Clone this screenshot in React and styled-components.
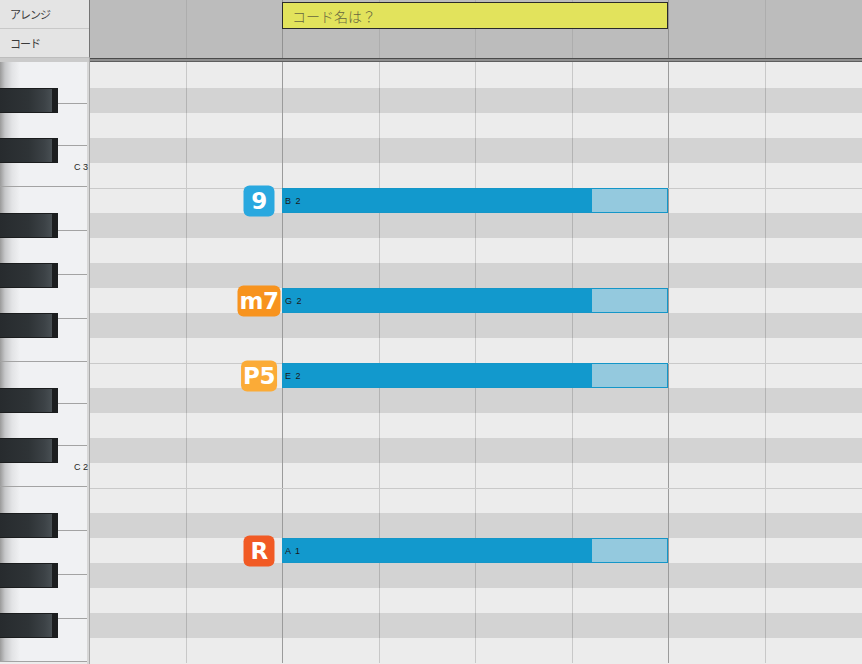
import React from 'react';
import styled, { createGlobalStyle } from 'styled-components';

const GlobalStyle = createGlobalStyle`
  html, body {
    margin: 0;
    padding: 0;
    overflow: hidden;
    background: #ececec;
  }
  body {
    font-family: "Liberation Sans", "Noto Sans CJK JP", sans-serif;
  }
`;

// beat columns of the roll (px), bar lines fall on columns 2 and 6
const COLS = [96, 96, 97, 96, 97, 96, 97, 97];
const BAR_COLS = [2, 6];
const colTemplate = COLS.map((w) => `${w}px`).join(' ');

const ROWS = [
  'E3', 'D#3', 'D3', 'C#3', 'C3', 'B2', 'A#2', 'A2', 'G#2', 'G2', 'F#2', 'F2',
  'E2', 'D#2', 'D2', 'C#2', 'C2', 'B1', 'A#1', 'A1', 'G#1', 'G1', 'F#1', 'F1',
];
const FIRST_ROW = 26;
const ROW = 25;
const rowHeight = (i) => (i === 0 ? FIRST_ROW : ROW);
const rowTop = (i) => (i === 0 ? 0 : FIRST_ROW + (i - 1) * ROW);

const WHITE_KEYS = [
  42, 41.67, 41.67, 43.75, 43.75, 43.75, 43.75,
  41.67, 41.67, 41.67, 43.75, 43.75, 43.75, 43.75,
];

const NOTES = [
  { name: 'B 2', row: 'B2', badge: '9', color: '#29a8df' },
  { name: 'G 2', row: 'G2', badge: 'm7', color: '#f7931e' },
  { name: 'E 2', row: 'E2', badge: 'P5', color: '#fbab37' },
  { name: 'A 1', row: 'A1', badge: 'R', color: '#f15a24' },
];

const Screen = styled.div`
  display: grid;
  grid-template-columns: 90px 772px;
  grid-template-rows: 58px 4px 602px;
  width: 862px;
  height: 664px;
  overflow: hidden;
`;

const LabelColumn = styled.div`
  display: flex;
  flex-direction: column;
  background: #e4e4e4;
  border-right: 1px solid #737373;
  border-bottom: 1px solid #bdbdbd;
`;

const LabelCell = styled.div`
  flex: 1;
  display: flex;
  align-items: center;
  padding-left: 10px;
  font-family: "Noto Sans CJK JP", sans-serif;
  font-size: 11px;
  letter-spacing: -1px;
  color: #3a3a3a;
  border-bottom: ${(p) => (p.$divider ? '1px solid #c8c8c8' : 'none')};
`;

const HeaderTrack = styled.div`
  display: grid;
  grid-template-columns: ${colTemplate};
  background: #bcbcbc;
`;

const HeadCell = styled.div`
  grid-row: 1;
  grid-column: ${(p) => p.$col + 1};
  border-left: ${(p) =>
    p.$col === 0 ? 'none' : p.$bar ? '1px solid rgba(0,0,0,0.22)' : '1px solid rgba(0,0,0,0.08)'};
`;

const ChordBlock = styled.div`
  grid-row: 1;
  grid-column: 3 / 7;
  align-self: start;
  z-index: 1;
  margin-top: 2px;
  height: 27px;
  box-sizing: border-box;
  display: flex;
  align-items: center;
  padding-left: 9px;
  background: #e2e35c;
  border: 1px solid #2a2a2a;
  font-family: "Noto Sans CJK JP", sans-serif;
  font-weight: 300;
  font-size: 14px;
  color: #66663f;
`;

const KeySep = styled.div`
  background: #cbcbcb;
  border-right: 1px solid #a9a9a9;
`;

const GridSep = styled.div`
  box-sizing: border-box;
  background: #8e8e8e;
  border-top: 1px solid #4a4a4a;
  border-bottom: 1px solid #5e5e5e;
`;

const Keyboard = styled.div`
  position: relative;
  display: flex;
  overflow: hidden;
  border-right: 1px solid #a9a9a9;
`;

const WhiteKeys = styled.div`
  flex: 1;
  display: flex;
  flex-direction: column;
`;

const WhiteKey = styled.div`
  flex: none;
  height: ${(p) => p.$h}px;
  box-sizing: border-box;
  border-bottom: 1px solid #a3a3a3;
  background: linear-gradient(
    to right,
    #9a9a9a 0px,
    #c6c7c9 5px,
    #e2e3e5 12px,
    #f0f1f3 20px
  );
`;

const KeyEdge = styled.div`
  width: 2px;
  background: #d7d7d7;
`;

const KeyOverlay = styled.div`
  position: absolute;
  top: 0;
  left: 0;
  right: 0;
  bottom: 0;
  display: flex;
  flex-direction: column;
`;

const KeySlot = styled.div`
  flex: none;
  height: ${(p) => p.$h}px;
  display: flex;
  align-items: flex-start;
`;

const BlackKey = styled.div`
  width: 58px;
  height: 25px;
  box-sizing: border-box;
  border-top: 1px solid #1b1d1e;
  border-bottom: 1px solid #1b1d1e;
  border-right: 6px solid #1c1e1f;
  background: linear-gradient(
    to right,
    #272b2e 0%,
    #2e3336 55%,
    #3c4246 85%,
    #484f53 100%
  );
`;

const OctaveLabel = styled.span`
  margin-left: auto;
  margin-right: 1px;
  font-family: "Liberation Sans", sans-serif;
  font-size: 9px;
  line-height: 9px;
  color: #1e1e1e;
`;

const Roll = styled.div`
  position: relative;
  overflow: hidden;
`;

const RowStack = styled.div`
  display: flex;
  flex-direction: column;
`;

const GridRow = styled.div`
  flex: none;
  display: grid;
  grid-template-columns: ${colTemplate};
  height: ${(p) => p.$h}px;
  box-sizing: border-box;
  background: ${(p) => (p.$black ? '#d3d3d3' : '#ececec')};
  border-top: ${(p) => (p.$line ? '1px solid #c9c9c9' : 'none')};
`;

const GridCell = styled.div`
  border-left: ${(p) =>
    p.$col === 0 ? 'none' : p.$bar ? '1px solid #9b9b9b' : '1px solid rgba(0,0,0,0.15)'};
`;

const Note = styled.div`
  position: absolute;
  left: 192px;
  width: 386px;
  height: 25px;
  box-sizing: border-box;
  display: flex;
  border: 1px solid #1496c8;
`;

const NoteBody = styled.div`
  flex: none;
  width: 309px;
  display: flex;
  align-items: center;
  padding-left: 2px;
  box-sizing: border-box;
  background: #1299cd;
  font-family: "Liberation Sans", sans-serif;
  font-size: 9px;
  letter-spacing: 1px;
  color: #1a1a1a;
`;

const NoteTail = styled.div`
  flex: 1;
  background: #94c9de;
`;

const Badge = styled.div`
  position: absolute;
  left: -24px;
  top: 50%;
  transform: translate(-50%, -50%);
  height: 31px;
  min-width: 31px;
  padding: 0 2px;
  box-sizing: border-box;
  border-radius: 6px;
  display: flex;
  align-items: center;
  justify-content: center;
  background: ${(p) => p.$color};
  color: #fff;
  font-family: "DejaVu Sans", sans-serif;
  font-weight: bold;
  font-size: 23px;
  line-height: 1;
  letter-spacing: -0.5px;
`;

const App = () => {
  return (
    <>
      <GlobalStyle />
      <Screen>
        <LabelColumn>
          <LabelCell $divider>アレンジ</LabelCell>
          <LabelCell>コード</LabelCell>
        </LabelColumn>

        <HeaderTrack>
          {COLS.map((w, i) => (
            <HeadCell key={i} $col={i} $bar={BAR_COLS.includes(i)} />
          ))}
          <ChordBlock>コード名は？</ChordBlock>
        </HeaderTrack>

        <KeySep />
        <GridSep />

        <Keyboard>
          <WhiteKeys>
            {WHITE_KEYS.map((h, i) => (
              <WhiteKey key={i} $h={h} />
            ))}
          </WhiteKeys>
          <KeyEdge />
          <KeyOverlay>
            {ROWS.map((n, i) => (
              <KeySlot key={n} $h={rowHeight(i)}>
                {n.includes('#') && <BlackKey />}
                {n.startsWith('C') && !n.includes('#') && (
                  <OctaveLabel>{`C ${n.slice(1)}`}</OctaveLabel>
                )}
              </KeySlot>
            ))}
          </KeyOverlay>
        </Keyboard>

        <Roll>
          <RowStack>
            {ROWS.map((n, i) => (
              <GridRow
                key={n}
                $h={rowHeight(i)}
                $black={n.includes('#')}
                $line={i > 0 && (n.startsWith('B') || n.startsWith('E'))}
              >
                {COLS.map((w, c) => (
                  <GridCell key={c} $col={c} $bar={BAR_COLS.includes(c)} />
                ))}
              </GridRow>
            ))}
          </RowStack>

          {NOTES.map((note) => (
            <Note key={note.row} style={{ top: rowTop(ROWS.indexOf(note.row)) }}>
              <Badge $color={note.color}>{note.badge}</Badge>
              <NoteBody>{note.name}</NoteBody>
              <NoteTail />
            </Note>
          ))}
        </Roll>
      </Screen>
    </>
  );
};

export default App;
